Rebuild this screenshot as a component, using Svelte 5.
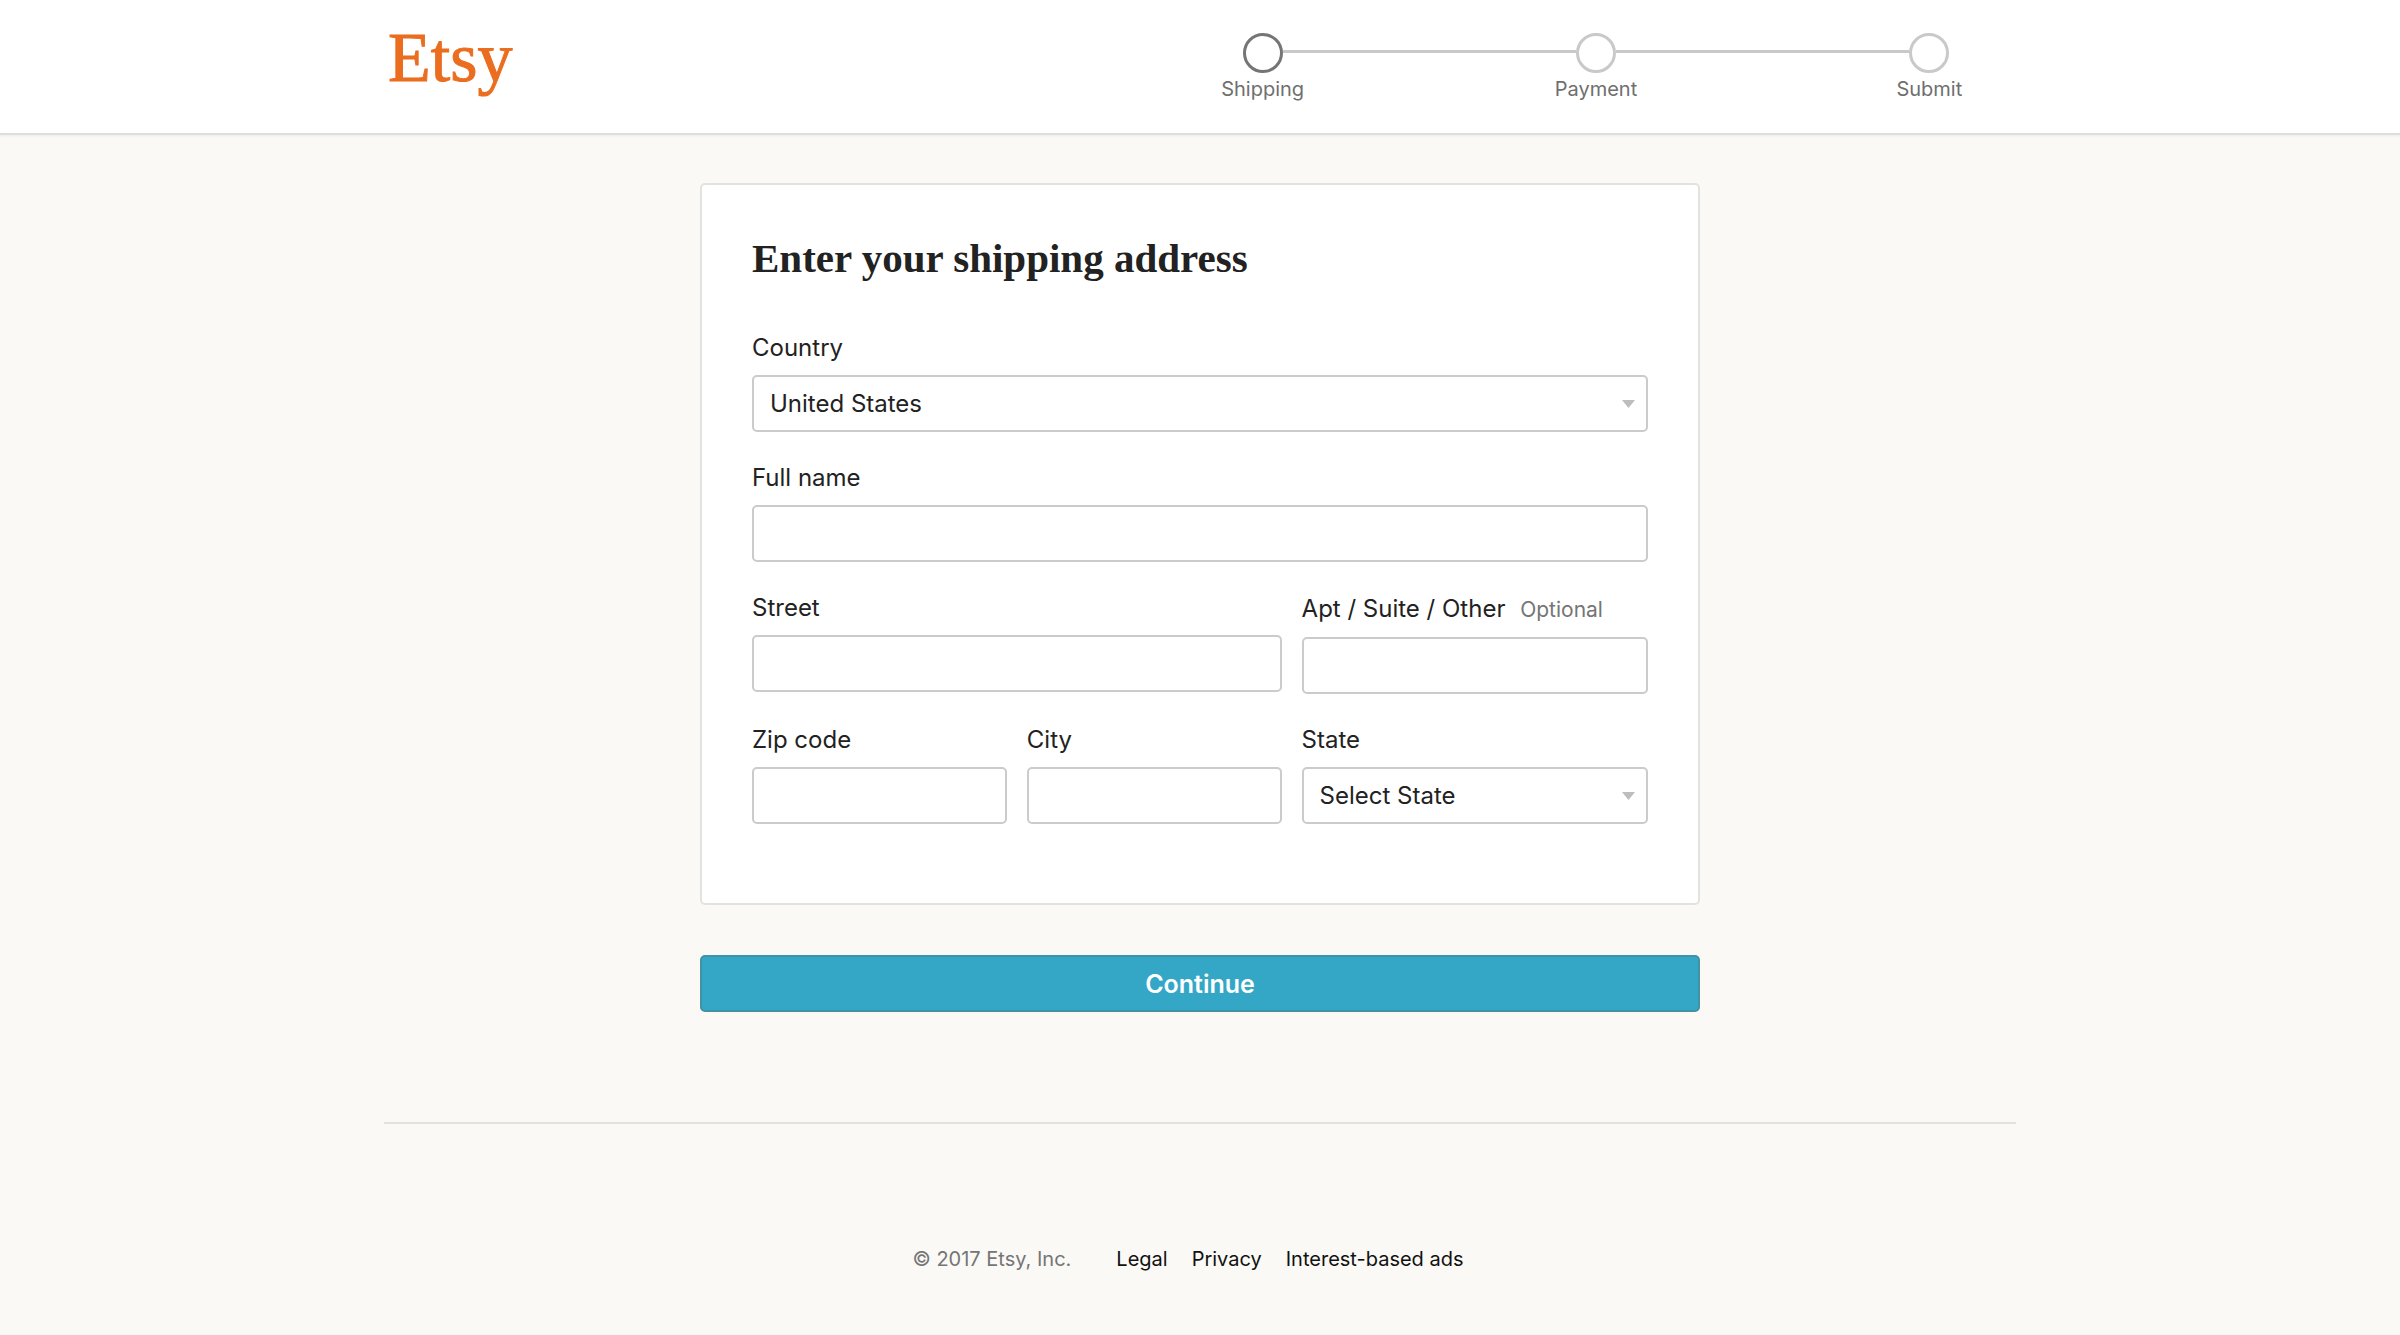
<script>
    const steps = ['Shipping', 'Payment', 'Submit'];
    const links = ['Legal', 'Privacy', 'Interest-based ads'];

    let currentStep = $state(0);

    let address = $state({
        country: 'United States',
        name: '',
        street: '',
        apt: '',
        zip: '',
        city: '',
        state: ''
    });

    function handleSubmit(e) {
        e.preventDefault();
        currentStep = Math.min(currentStep + 1, steps.length - 1);
    }
</script>

{#snippet caret()}
    <svg class="caret" viewBox="0 0 13 8" aria-hidden="true">
        <path d="M0 0h13L6.5 8z" />
    </svg>
{/snippet}

<div class="page">
    <header>
        <div class="header-inner">
            <a class="logo" href="/">Etsy</a>
            <ol class="steps">
                {#each steps as step, i}
                    <li class:current={i === currentStep}>
                        <div class="marker">
                            <span class="line" class:hidden={i === 0}></span>
                            <span class="circle"></span>
                            <span class="line" class:hidden={i === steps.length - 1}></span>
                        </div>
                        <span class="step-name">{step}</span>
                    </li>
                {/each}
            </ol>
        </div>
    </header>

    <main>
        <form onsubmit={handleSubmit}>
            <div class="card">
                <h1>Enter your shipping address</h1>
                <div class="fields">
                    <div class="field full">
                        <label for="country">Country</label>
                        <div class="select">
                            <select id="country" bind:value={address.country}>
                                <option>United States</option>
                                <option>Canada</option>
                                <option>United Kingdom</option>
                            </select>
                            {@render caret()}
                        </div>
                    </div>
                    <div class="field full">
                        <label for="name">Full name</label>
                        <input id="name" type="text" bind:value={address.name} />
                    </div>
                    <div class="field wide">
                        <label for="street">Street</label>
                        <input id="street" type="text" bind:value={address.street} />
                    </div>
                    <div class="field medium">
                        <label class="with-note" for="apt">Apt / Suite / Other <span class="note">Optional</span></label>
                        <input id="apt" type="text" bind:value={address.apt} />
                    </div>
                    <div class="field small">
                        <label for="zip">Zip code</label>
                        <input id="zip" type="text" bind:value={address.zip} />
                    </div>
                    <div class="field small">
                        <label for="city">City</label>
                        <input id="city" type="text" bind:value={address.city} />
                    </div>
                    <div class="field medium">
                        <label for="state">State</label>
                        <div class="select">
                            <select id="state" bind:value={address.state}>
                                <option value="">Select State</option>
                                <option>California</option>
                                <option>New York</option>
                                <option>Texas</option>
                            </select>
                            {@render caret()}
                        </div>
                    </div>
                </div>
            </div>
            <button type="submit">Continue</button>
        </form>
    </main>

    <footer>
        <span class="copyright">© 2017 Etsy, Inc.</span>
        <ul>
            {#each links as link}
                <li><a href="#{link.toLowerCase().replaceAll(' ', '-')}">{link}</a></li>
            {/each}
        </ul>
    </footer>
</div>

<style>
    :global(body) {
        margin: 0;
        background-color: #faf9f5;
    }

    .page {
        font-family: Inter, "Liberation Sans", sans-serif;
        font-size: 24px;
        line-height: 28px;
        color: #222;
    }

    .page * {
        box-sizing: border-box;
    }

    header {
        background-color: #fff;
        border-bottom: 2px solid #dededb;
        box-shadow: 0 1px 3px rgba(0, 0, 0, 0.06);
    }

    .header-inner {
        max-width: 1792px;
        margin: 0 auto;
        padding: 33px 0 30px 84px;
        display: flex;
        justify-content: space-between;
        align-items: flex-start;
    }

    .logo {
        font-family: "Liberation Serif", serif;
        font-size: 70px;
        line-height: 50px;
        color: #eb6d20;
        -webkit-text-stroke: 1px #eb6d20;
        text-decoration: none;
    }

    .steps {
        width: 1000px;
        margin: 0;
        padding: 0;
        list-style: none;
        display: flex;
    }

    .steps li {
        flex: 1;
        text-align: center;
    }

    .marker {
        display: flex;
    }

    .line {
        flex: 1;
        height: 3px;
        margin-top: 17px;
        background-color: #c9c9c9;
    }

    .line.hidden {
        visibility: hidden;
    }

    .circle {
        width: 40px;
        height: 40px;
        border: 3px solid #c9c9c9;
        border-radius: 50%;
    }

    .current .circle {
        border-color: #757575;
    }

    .step-name {
        display: block;
        padding-top: 2px;
        font-size: 20px;
        color: #6f6f6f;
    }

    main {
        max-width: 1000px;
        margin: 0 auto;
        padding: 48px 0 110px;
    }

    .card {
        padding: 50px 50px 79px;
        background-color: #fff;
        border: 2px solid #e2e2de;
        border-radius: 5px;
    }

    h1 {
        margin: 0 0 53px;
        font-family: "Liberation Serif", serif;
        font-size: 41px;
        line-height: 46px;
        font-weight: bold;
    }

    .fields {
        display: grid;
        grid-template-columns: repeat(10, 1fr);
        gap: 32px 20px;
    }

    .full {
        grid-column: span 10;
    }

    .wide {
        grid-column: span 6;
    }

    .medium {
        grid-column: span 4;
    }

    .small {
        grid-column: span 3;
    }

    label {
        display: block;
        margin-bottom: 13px;
    }

    .with-note {
        line-height: 29px;
    }

    .note {
        margin-left: 8px;
        font-size: 21px;
        color: #757575;
    }

    input,
    select {
        display: block;
        width: 100%;
        height: 57px;
        padding: 0 16px;
        background-color: #fff;
        border: 2px solid #cbcbcb;
        border-radius: 5px;
        color: #222;
        font-family: inherit;
        font-size: 24px;
        outline: none;
    }

    input:focus,
    select:focus {
        border-color: #999;
    }

    .select {
        position: relative;
    }

    select {
        appearance: none;
    }

    .caret {
        position: absolute;
        top: 25px;
        right: 13px;
        width: 13px;
        height: 8px;
        fill: #bdbdbd;
        pointer-events: none;
    }

    button {
        display: block;
        width: 100%;
        height: 57px;
        margin-top: 50px;
        background-color: #35a7c6;
        border: 2px solid #3f93a5;
        border-radius: 5px;
        color: #fff;
        font-family: inherit;
        font-size: 25px;
        font-weight: 600;
        cursor: pointer;
    }

    footer {
        max-width: 1632px;
        margin: 0 auto;
        padding: 121px 0 62px;
        border-top: 2px solid #e1e1de;
        display: flex;
        justify-content: center;
        font-size: 20px;
    }

    .copyright {
        margin-right: 45px;
        color: #757575;
    }

    footer ul {
        margin: 0;
        padding: 0;
        list-style: none;
        display: flex;
    }

    footer li {
        margin-right: 24px;
    }

    footer a {
        color: #111;
        text-decoration: none;
    }
</style>
